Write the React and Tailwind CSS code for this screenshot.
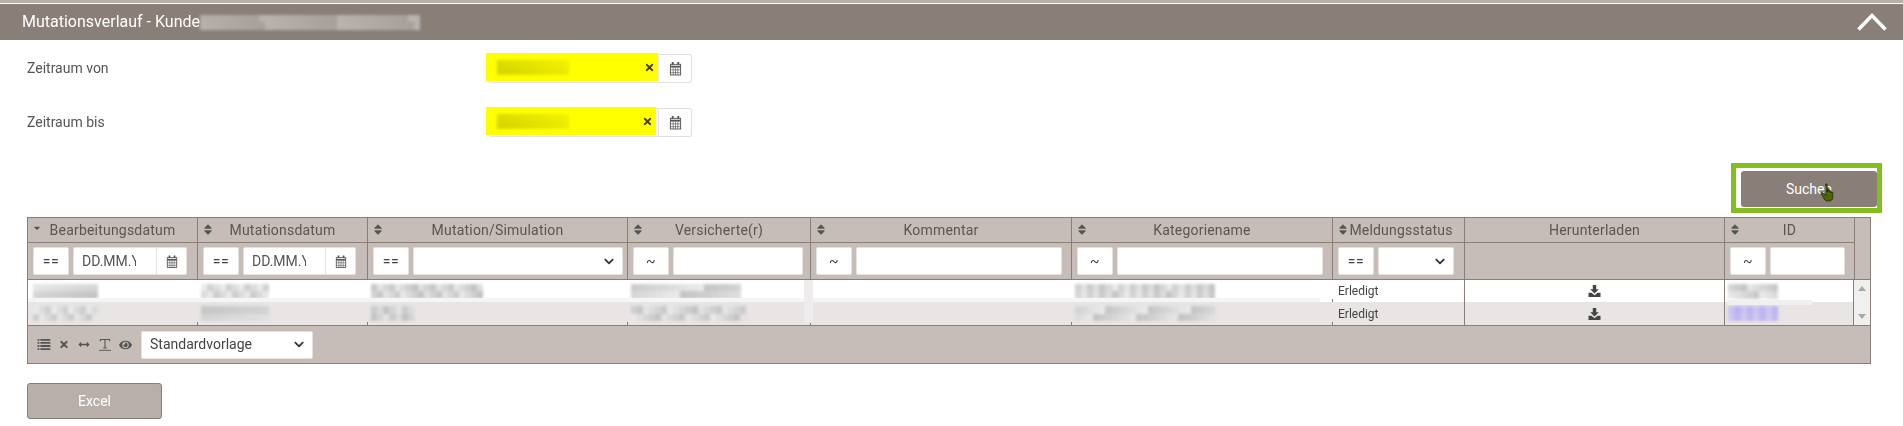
import React from 'react';
import { FaChevronDown, FaTimes, FaSort, FaSortDown, FaEye, FaArrowsAltH } from 'react-icons/fa';

const gridCols = 'grid grid-cols-[170px_170px_260px_183px_261px_261px_132px_260px_130px_1fr]';

// pixelated patch for values that are blurred out in the picture
function Mosaic({ width, seed = 1, tint = 'gray', className = '' }) {
  const cols = Math.round(width / 6);
  const cells = [];
  for (let i = 0; i < cols * 2; i++) {
    const v = ((i + 3) * (seed + 7) * 37) % 100;
    const shade = tint === 'purple'
      ? `rgb(${185 + v / 3}, ${178 + v / 3}, 240)`
      : `rgb(${195 + v / 2.5}, ${195 + v / 2.5}, ${195 + v / 2.5})`;
    cells.push(<span key={i} style={{ backgroundColor: shade }} />);
  }
  return (
    <div
      className={`grid h-[15px] blur-[1.5px] ${className}`}
      style={{ width, gridTemplateColumns: `repeat(${cols}, 1fr)` }}
    >
      {cells}
    </div>
  );
}

function CalendarIcon({ className = '' }) {
  return (
    <svg viewBox="0 0 14 16" className={className} fill="none" stroke="currentColor">
      <rect x="1.5" y="3.5" width="11" height="11.5" strokeWidth="1" />
      <path d="M1.5 6h11" strokeWidth="2" />
      <path d="M1.5 9.5h11M1.5 12.5h11M4.500 7v8M7 7v8M9.500 7v8" strokeWidth="0.7" />
      <path d="M4 1v3M10 1v3" strokeWidth="2" />
    </svg>
  );
}

function SaveIcon({ className = '' }) {
  return (
    <svg viewBox="0 0 14 14" className={className} fill="currentColor">
      <path d="M5 0h4v5h3L7 10 2 5h3z" />
      <path d="M0 9h3.500L7 12l3.500-3H14v5H0z" />
    </svg>
  );
}

function ListIcon({ className = '' }) {
  return (
    <svg viewBox="0 0 14 12" className={className} fill="currentColor">
      <path d="M0 0h2v2H0zM3 0h11v2H3zM0 3.300h2v2H0zM3 3.300h11v2H3zM0 6.600h2v2H0zM3 6.600h11v2H3zM0 10h2v2H0zM3 10h11v2H3z" />
    </svg>
  );
}

function TextHeightIcon({ className = '' }) {
  return (
    <svg viewBox="0 0 13 14" className={className} fill="none" stroke="currentColor">
      <path d="M1.500 3V1h10v2M6.500 1v9M4.500 10.300h4" strokeWidth="1.2" />
      <path d="M0 12.800h13" strokeWidth="1" />
    </svg>
  );
}

function HandCursor() {
  return (
    <svg viewBox="0 0 17 21" className="absolute left-[79px] top-[12px] h-[19px] w-[16px]" fill="#4d6600" stroke="#111" strokeWidth="0.7">
      <path d="M6 1.500c0-1 1.600-1 1.600 0V10l.6-3c1.400-.5 1.600.4 1.600 1v2l.4-1.500c1.300-.4 1.600.4 1.600 1V11l.5-1c1.200-.4 1.500.4 1.500 1v5c0 2.500-2 4-4.500 4H8c-2 0-3-1-4-3L1 12c-.5-1 .7-2 1.700-1L6 13.500z" />
    </svg>
  );
}

function DateField({ yellow = 'w-[172px]' }) {
  return (
    <div className="flex h-[29px] w-[204px]">
      <div className="flex h-[29px] flex-1 rounded-l-[3px] border border-[#e5e5e5] bg-white">
        <div className={`-mt-[2px] -ml-[3px] flex h-[28px] shrink-0 items-center justify-between bg-[#ffff00] pr-[3px] pl-[11px] ${yellow}`}>
          <Mosaic width={72} seed={4} className="opacity-70 mix-blend-multiply" />
          <FaTimes className="h-[11px] w-[11px] text-[#444]" />
        </div>
      </div>
      <div className="flex w-[33px] items-center justify-center rounded-r-[3px] border border-l-0 border-[#e0e0e0] bg-white text-[#555]">
        <CalendarIcon className="h-[15px] w-[13px]" />
      </div>
    </div>
  );
}

function SortHead({ children, sorted, icon = true }) {
  return (
    <div className="relative flex h-[25px] items-center justify-center border-r border-b border-[#8a7e78] text-[14px] tracking-[0.2px] text-[#5a5553]">
      {icon && (sorted
        ? <FaSortDown className="absolute top-[3px] left-[5px] h-[10px] w-[8px] text-[#555]" />
        : <FaSort className="absolute top-[5px] left-[5px] h-[13px] w-[10px] text-[#555]" />)}
      <span>{children}</span>
    </div>
  );
}

function Box({ className = '', children }) {
  return (
    <div className={`flex h-[28px] items-center rounded-[2px] border border-[#e4e2e1] bg-white text-[14px] text-[#444] ${className}`}>
      {children}
    </div>
  );
}

function FilterCell({ op, children }) {
  return (
    <div className="flex items-center gap-[4px] border-r border-[#8a7e78] pl-[5px]">
      <Box className="w-[36px] shrink-0 justify-center">
        <span className="tracking-[0.5px]">{op}</span>
      </Box>
      {children}
    </div>
  );
}

function DateFilter({ width }) {
  return (
    <Box className={`${width} justify-between overflow-hidden`}>
      <span className="ml-[8px] w-[54px] overflow-hidden whitespace-nowrap text-[#555]">DD.MM.Y</span>
      <span className="flex h-full w-[30px] shrink-0 items-center justify-center border-l border-[#e4e2e1] text-[#555]">
        <CalendarIcon className="h-[15px] w-[12px]" />
      </span>
    </Box>
  );
}

function SelectBox({ width, children }) {
  return (
    <Box className={`${width} justify-between pr-[7px] pl-[8px]`}>
      <span>{children}</span>
      <FaChevronDown className="h-[11px] w-[12px] text-[#333]" />
    </Box>
  );
}

function DataCell({ children, border = false, tick = true, className = '' }) {
  return (
    <div className={`relative flex items-center overflow-hidden ${border ? 'border-r border-[#8a7e78]' : ''} ${className}`}>
      {children}
      {!border && tick && <span className="absolute right-0 bottom-0 h-[3px] w-px bg-[#8a7e78]" />}
    </div>
  );
}

function DataRow({ bg, widths, status, seed, idTint }) {
  return (
    <div className={`${gridCols} ${bg}`}>
      <DataCell className="pl-[5px]"><Mosaic width={65} seed={seed} /></DataCell>
      <DataCell className="pl-[3px]"><Mosaic width={68} seed={seed + 1} /></DataCell>
      <DataCell className="pl-[3px]"><Mosaic width={widths[0]} seed={seed + 2} /></DataCell>
      <DataCell className="pl-[3px]"><Mosaic width={widths[1]} seed={seed + 3} /></DataCell>
      <DataCell />
      <DataCell className="pl-[3px]"><Mosaic width={140} seed={seed + 4} /></DataCell>
      <DataCell border className="pl-[5px] text-[12px] text-[#444]">{status}</DataCell>
      <DataCell border className="justify-center text-[#444]"><SaveIcon className="h-[12px] w-[13px]" /></DataCell>
      <DataCell border className="pl-[3px]"><Mosaic width={50} seed={seed + 5} tint={idTint} /></DataCell>
      <div />
    </div>
  );
}

export default function App() {
  return (
    <div className="min-h-[426px] bg-white font-['Roboto',sans-serif] text-[14px] text-[#555]">
      <div className="h-[3px] bg-[#b8afaa]" />
      <div className="mt-px flex h-[36px] items-center justify-between bg-[#8a7e78] pr-[16px] pl-[22px] text-white">
        <div className="flex items-center text-[16px]">
          <span>Mutationsverlauf - Kunde</span>
          <Mosaic width={220} seed={9} className="opacity-50" />
        </div>
        <svg viewBox="0 0 30 18" className="h-[18px] w-[30px]" fill="none" stroke="white" strokeWidth="3.5">
          <path d="M1.500 16.500 15 2.500l13.500 14" />
        </svg>
      </div>

      <div className="flex flex-col px-[27px] pt-[14px]">
        <div className="flex h-[29px] items-center">
          <span className="w-[461px]">Zeitraum von</span>
          <DateField />
        </div>
        <div className="mt-[25px] flex h-[29px] items-center">
          <span className="w-[461px]">Zeitraum bis</span>
          <DateField yellow="w-[170px]" />
        </div>

        <div className="mt-[26px] flex justify-end">
          <div className="-mr-[6px] flex h-[50px] w-[151px] border-[5px] border-[#84bd1e] bg-white pt-[3px] pb-px pl-[5px]">
            <button className="relative h-[36px] w-full rounded-[3px] bg-[#8a7e78] text-[14px] text-white">
              Suchen
              <HandCursor />
            </button>
          </div>
        </div>

        <div className="mt-[4px] w-[1844px] border border-[#8a7e78]">
          <div className={`${gridCols} bg-[#c6bdb9]`}>
            <SortHead sorted>Bearbeitungsdatum</SortHead>
            <SortHead>Mutationsdatum</SortHead>
            <SortHead>Mutation/Simulation</SortHead>
            <SortHead>Versicherte(r)</SortHead>
            <SortHead>Kommentar</SortHead>
            <SortHead>Kategoriename</SortHead>
            <SortHead><span className="pl-[5px]">Meldungsstatus</span></SortHead>
            <SortHead icon={false}>Herunterladen</SortHead>
            <SortHead>ID</SortHead>
            <div />
          </div>
          <div className={`${gridCols} h-[37px] border-b border-[#8a7e78] bg-[#c6bdb9]`}>
            <FilterCell op="=="><DateFilter width="w-[114px]" /></FilterCell>
            <FilterCell op="=="><DateFilter width="w-[113px]" /></FilterCell>
            <FilterCell op="=="><SelectBox width="w-[210px]" /></FilterCell>
            <FilterCell op="~"><Box className="w-[130px]" /></FilterCell>
            <FilterCell op="~"><Box className="w-[206px]" /></FilterCell>
            <FilterCell op="~"><Box className="w-[206px]" /></FilterCell>
            <FilterCell op="=="><SelectBox width="w-[76px]" /></FilterCell>
            <div className="border-r border-[#8a7e78]" />
            <FilterCell op="~"><Box className="w-[75px]" /></FilterCell>
            <div />
          </div>

          <div className="relative">
            <div className="grid grid-rows-[22px_23px]">
              <DataRow bg="bg-white" widths={[112, 110]} status="Erledigt" seed={1} idTint="gray" />
              <DataRow bg="bg-[#e8e5e4]" widths={[43, 115]} status="Erledigt" seed={11} idTint="purple" />
            </div>
            {/* smear left by the blurring */}
            <div className="absolute top-[18px] left-0 h-[4px] w-[1292px] bg-[#f6f5f5]" />
            <div className="absolute top-[20px] left-[1699px] h-[5px] w-[85px] bg-[#f1efef]" />
            <div className="absolute top-0 left-[776px] h-[43px] w-[9px] bg-[#eeecec]" />
            <div className="absolute top-0 right-0 flex h-full w-[17px] flex-col items-center justify-between border-l border-[#8a7e78] bg-[#f1f0f0] py-[6px] text-[#a8a8a8]">
              <span className="h-0 w-0 border-x-[4px] border-b-[5px] border-x-transparent border-b-current" />
              <span className="h-0 w-0 border-x-[4px] border-t-[5px] border-x-transparent border-t-current" />
            </div>
          </div>

          <div className="flex h-[38px] items-center border-t border-[#8a7e78] bg-[#c6bdb9] pl-[9px] text-[#555]">
            <ListIcon className="h-[11px] w-[14px]" />
            <FaTimes className="ml-[8px] h-[11px] w-[10px]" />
            <FaArrowsAltH className="ml-[8px] h-[11px] w-[14px]" />
            <TextHeightIcon className="ml-[8px] h-[14px] w-[12px]" />
            <FaEye className="ml-[8px] h-[12px] w-[13px]" />
            <SelectBox width="w-[172px] ml-[9px]">Standardvorlage</SelectBox>
          </div>
        </div>

        <button className="mt-[19px] h-[36px] w-[135px] rounded-[3px] border border-[#8a7e78] bg-[#b8afaa] text-[14px] text-white">
          Excel
        </button>
      </div>
    </div>
  );
}
